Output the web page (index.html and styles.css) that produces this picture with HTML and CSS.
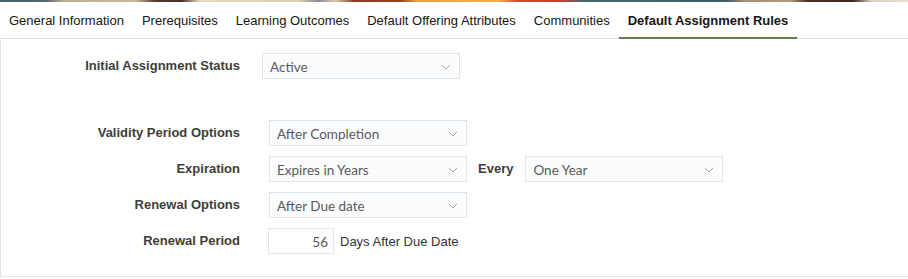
FILE: index.html
```html
<!DOCTYPE html>
<html lang="en">
<head>
  <meta charset="UTF-8" />
  <meta name="viewport" content="width=device-width, initial-scale=1.0" />
  <title>Default Assignment Rules</title>
  <link rel="stylesheet" href="styles.css">
</head>
<body>
  <div class="banner"></div>

  <nav class="tabs">
    <a class="tab">General Information</a>
    <a class="tab">Prerequisites</a>
    <a class="tab">Learning Outcomes</a>
    <a class="tab">Default Offering Attributes</a>
    <a class="tab">Communities</a>
    <a class="tab active">Default Assignment Rules</a>
  </nav>

  <div class="panel">
    <div class="form form-status">
      <label class="label">Initial Assignment Status</label>
      <div class="select"><span>Active</span><svg class="chev" viewBox="0 0 10 6"><path d="M1 1l4 4 4-4"/></svg></div>
    </div>

    <div class="form form-validity">
      <label class="label">Validity Period Options</label>
      <div class="field">
        <div class="select"><span>After Completion</span><svg class="chev" viewBox="0 0 10 6"><path d="M1 1l4 4 4-4"/></svg></div>
      </div>

      <label class="label">Expiration</label>
      <div class="field">
        <div class="select"><span>Expires in Years</span><svg class="chev" viewBox="0 0 10 6"><path d="M1 1l4 4 4-4"/></svg></div>
        <label class="label every">Every</label>
        <div class="select"><span>One Year</span><svg class="chev" viewBox="0 0 10 6"><path d="M1 1l4 4 4-4"/></svg></div>
      </div>

      <label class="label">Renewal Options</label>
      <div class="field">
        <div class="select"><span>After Due date</span><svg class="chev" viewBox="0 0 10 6"><path d="M1 1l4 4 4-4"/></svg></div>
      </div>

      <label class="label">Renewal Period</label>
      <div class="field">
        <input class="number" type="text" value="56" />
        <span class="suffix">Days After Due Date</span>
      </div>
    </div>
  </div>
</body>
</html>
```

FILE: styles.css
```css
body {
  margin: 0;
  font-family: "Liberation Sans", Arial, sans-serif;
  font-size: 13px;
  color: #161513;
  background: #fff;
}

.banner {
  height: 2px;
  background: linear-gradient(90deg,
    #46616a 0%, #52666c 5%, #bfae92 7%, #c9b89c 15%, #5c3a33 17%, #4e2e2a 20%,
    #e6dbc2 22%, #d9cdb3 33%, #8d8a99 35%, #d8c9a9 37%, #8a3c22 39%, #93401f 44%,
    #e9a545 46%, #eeae4d 55%, #cc4a30 57%, #c64030 62%, #486870 64%, #3f5d66 80%,
    #a88e72 82%, #b09a7c 87%, #4a2c24 89%, #3e2822 94%, #ddd3c1 96%, #e6dfd0 100%);
}

.tabs {
  display: flex;
  border-bottom: 1px solid #d6e0e7;
}

.tab {
  padding: 3px 9px 0;
  height: 32px;
  line-height: 32px;
  border-bottom: 2px solid transparent;
  margin-bottom: -1px;
  white-space: nowrap;
  cursor: pointer;
}

.tab.active {
  font-weight: bold;
  border-bottom-color: #5e7c4c;
}

.panel {
  height: 238px;
  border-left: 1px solid #dde4ea;
  border-bottom: 1px solid #dde4ea;
  box-sizing: border-box;
}

.form {
  display: grid;
  grid-template-columns: 239px auto;
  align-items: center;
  justify-items: start;
}

.form-status {
  column-gap: 22px;
  padding-top: 14px;
}

.form-validity {
  column-gap: 29px;
  row-gap: 10px;
  padding-top: 41px;
}

.label {
  justify-self: end;
  font-weight: bold;
  color: #3d3d3d;
  margin-top: -2px;
}

.field {
  display: flex;
  align-items: center;
}

.select {
  display: flex;
  align-items: center;
  justify-content: space-between;
  box-sizing: border-box;
  width: 198px;
  height: 26px;
  padding: 1px 8px 0 7px;
  border: 1px solid #dfe5e9;
  background: #fbfcfd;
  font-family: Lato, "Open Sans", sans-serif;
  font-size: 13.5px;
  color: #5a5a5a;
}

.chev {
  width: 10px;
  height: 6px;
  fill: none;
  stroke: #a6a6a6;
  stroke-width: 1;
}

.every {
  margin: -2px 12px 0 11px;
}

.number {
  box-sizing: border-box;
  width: 66px;
  height: 26px;
  margin: 0 0 0 -1px;
  padding: 2px 5px 0;
  border: 1px solid #dfe5e9;
  text-align: right;
  font-family: Lato, "Open Sans", sans-serif;
  font-size: 13.5px;
  color: #5a5a5a;
  outline: none;
}

.suffix {
  margin-left: 6px;
  color: #333;
}
```
